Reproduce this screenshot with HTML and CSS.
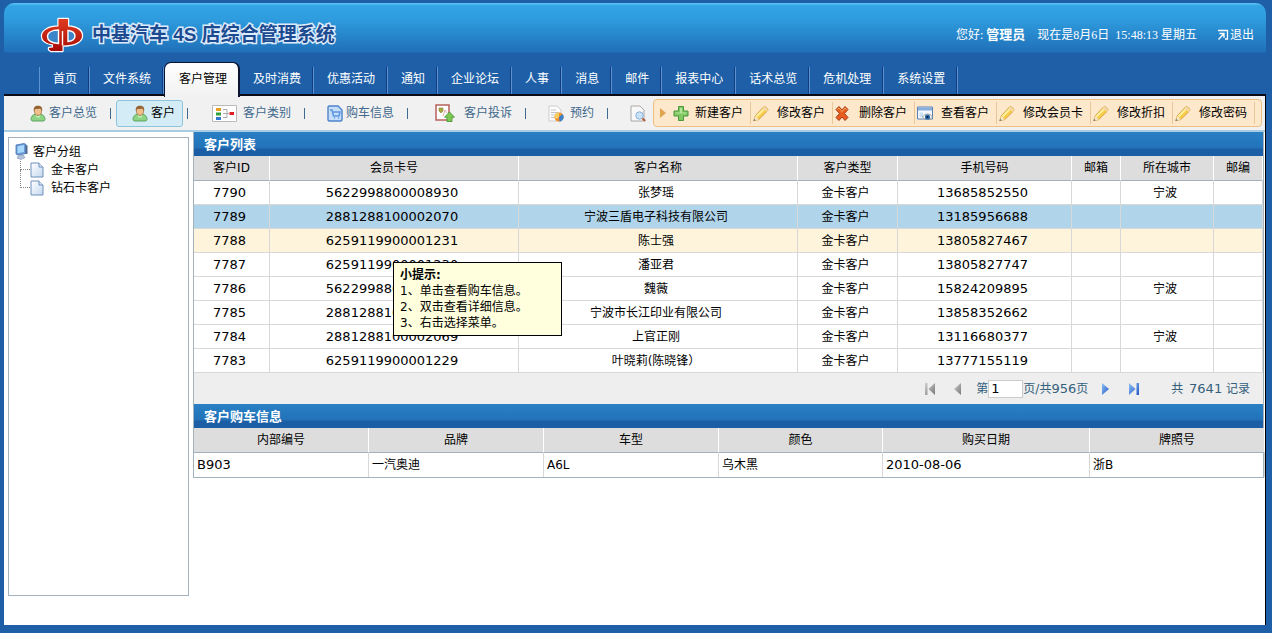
FILE: index.html
```html
<!DOCTYPE html>
<html lang="zh-CN">
<head>
<meta charset="utf-8">
<title>中基汽车 4S 店综合管理系统</title>
<link rel="stylesheet" href="styles.css">
</head>
<body>
<svg class="defs" aria-hidden="true">
  <defs>
    <linearGradient id="redFill" x1="0" y1="0" x2="0" y2="1"><stop offset="0" stop-color="#e03c20"/><stop offset="1" stop-color="#a80c08"/></linearGradient>
    <linearGradient id="blueFill" x1="0" y1="0" x2="1" y2="1"><stop offset="0" stop-color="#8cc4f4"/><stop offset="1" stop-color="#2454c8"/></linearGradient>
    <linearGradient id="grayFill" x1="0" y1="0" x2="1" y2="1"><stop offset="0" stop-color="#d0d0d0"/><stop offset="1" stop-color="#777"/></linearGradient>
    <linearGradient id="pageFill" x1="0" y1="0" x2="1" y2="1"><stop offset="0" stop-color="#fff"/><stop offset="1" stop-color="#c4d8f0"/></linearGradient>
    <symbol id="user" viewBox="0 0 16 16">
      <path d="M1 14c0-3 2-5 4.500-5.500h5C13 9 15 11 15 14c0 1-1 1.500-2 1.500H3c-1 0-2-.5-2-1.500z" fill="#8cd484" stroke="#5ca460"/>
      <path d="M6 9l2 2 2-2v3H6z" fill="#c4f0bc"/>
      <ellipse cx="8" cy="5.500" rx="3.500" ry="4.300" fill="#f0c08c" stroke="#a06a38" stroke-width=".7"/>
      <path d="M4 6C3 2 5 .3 8 .3S13 2 12 6c-.5-2-1-2.500-2-3-2 .8-4 .6-5 .4z" fill="#956434"/>
    </symbol>
    <symbol id="pencil" viewBox="0 0 16 16">
      <path d="M.8 15.200l1.500-5L10.500 1.500c1.500-1.500 5.500 2 4.200 3.700L5.800 14z" fill="#f8cc48" stroke="#d09c40" stroke-width=".9"/>
      <path d="M3.500 11L11.500 3" stroke="#fff0a0" stroke-width="2"/>
      <path d="M10.500 1.500c1.500-1.500 5.500 2 4.200 3.700l-1.200 1-4-3.700z" fill="#f2d7a4"/>
      <path d="M.8 15.200l1.500-5L5.800 14z" fill="#f5e4c4"/><path d="M.5 15.500l.6-2 1.400 1.300z" fill="#555"/>
    </symbol>
    <symbol id="page" viewBox="0 0 14 16">
      <path d="M1 1h8l4 4v10H1z" fill="url(#pageFill)" stroke="#6f91bd"/>
      <path d="M9 1v4h4" fill="#dbe8f8" stroke="#6f91bd"/>
    </symbol>
  </defs>
</svg>

<header class="header">
  <div class="brand">
    <svg class="logo" viewBox="0 0 44 36" aria-hidden="true">
      <path d="M18.500 2h9.500v7.500C37 10 42 13.500 42 19s-7 9.500-19.500 9.500V34H11l-2-1.500V31l4-.5v-3C6 26.500 2 23.500 2 19c0-5.500 7-9.500 16.500-9.500z" fill="url(#redFill)" stroke="#fff" stroke-width="2.400" stroke-linejoin="round" paint-order="stroke"/>
      <path d="M18.500 13C12 13 7.500 15.500 7.500 19.500S12 26 18.500 26.500z" fill="#3a86c8" stroke="#fff" stroke-width="1.400"/>
      <path d="M22.500 14v14.500" stroke="#fff" stroke-width="1.400"/>
      <path d="M28 13.500c4 .5 7 2.500 7 5.500s-3 5-7 5.500z" fill="#3a86c8" stroke="#fff" stroke-width="1.400"/>
    </svg>
    <h1 class="system-name">中基汽车 4S 店综合管理系统</h1>
    <div class="session">
      <span>您好: <strong class="session-user">管理员</strong></span>
      <span class="session-date">现在是8月6日</span>
      <span class="session-time">15:48:13 星期五</span>
      <a class="logout" href="#">
        <svg class="logout-icon" viewBox="0 0 12 12" aria-hidden="true"><path d="M1 1.500h9.500v8.500H8M2.500 4.500H7V9M7 4.500L1.500 10.500" fill="none" stroke="#fff" stroke-width="1.300"/></svg>退出</a>
    </div>
  </div>
  <nav class="tabs">
    <a class="tab" href="#">首页</a>
    <a class="tab" href="#">文件系统</a>
    <a class="tab tab-active" href="#" aria-current="page">客户管理</a>
    <a class="tab" href="#">及时消费</a>
    <a class="tab" href="#">优惠活动</a>
    <a class="tab" href="#">通知</a>
    <a class="tab" href="#">企业论坛</a>
    <a class="tab" href="#">人事</a>
    <a class="tab" href="#">消息</a>
    <a class="tab" href="#">邮件</a>
    <a class="tab" href="#">报表中心</a>
    <a class="tab" href="#">话术总览</a>
    <a class="tab" href="#">危机处理</a>
    <a class="tab" href="#">系统设置</a>
  </nav>
</header>

<div class="body-panel">
  <div class="toolbar">
    <nav class="views">
      <a class="view view-wide" href="#"><svg class="icon" aria-hidden="true"><use href="#user"/></svg>客户总览</a>
      <a class="view view-current" href="#"><svg class="icon" aria-hidden="true"><use href="#user"/></svg>客户</a>
      <a class="view view-wide view-spaced" href="#"><svg class="icon icon-chart" viewBox="0 0 25 17" aria-hidden="true"><path d="M.5.5h24v16H.5z" fill="#fff" stroke="#bbb"/><path d="M4 3h5v3H4z" fill="#e8a020"/><path d="M4 7.500h5v3H4z" fill="#30a040"/><path d="M4 12h5v3H4z" fill="#3078d0"/><path d="M11 4.500h4v8h-4M11 8.500h6" fill="none" stroke="#aaa"/><path d="M17.500 7H22v3h-4.500z" fill="#e02020"/></svg>客户类别</a>
      <a class="view" href="#"><svg class="icon" viewBox="0 0 16 17" aria-hidden="true"><path d="M1 2l1-1h9l4 4v10l-1 1H2l-1-1z" fill="#c6def8" stroke="#4c84cc" stroke-width="1.400"/><path d="M3 5h2l1.500 6H12l1-4H6M7 13h1M11 13h1" fill="none" stroke="#5a96e0" stroke-width="1.500"/></svg>购车信息</a>
      <a class="view view-loose" href="#"><svg class="icon icon-complaint" viewBox="0 0 20 18" aria-hidden="true"><path d="M1 1h13v15H1z" fill="#fff" stroke="#b8605c" stroke-width="1.500"/><path d="M4 4h4v3L6 9 4 7z" fill="#a8a840" stroke="#808030" stroke-width=".6"/><path d="M8 12l2-6 2 3" fill="none" stroke="#e4b0a8"/><path d="M14.500 8l5 5.200H17V17.500h-5v-4.300H9.500z" fill="#7cc850" stroke="#3f8f2c" stroke-width=".8"/></svg>客户投诉</a>
      <a class="view view-spaced" href="#"><svg class="icon" viewBox="0 0 16 17" aria-hidden="true"><path d="M1 1h8l4 4v11H1z" fill="#fcfcfc" stroke="#ccc"/><path d="M3 5h5M3 7.500h7M3 10h6M3 12.500h4" stroke="#c4c4c4"/><circle cx="11" cy="12" r="4.500" fill="#f0902c"/><path d="M11 12V7.500a4.500 4.500 0 0 0-4.500 4.500c1 2 3 2 4.500 0z" fill="#f4d060"/><path d="M11 12l3.500-3a4.500 4.500 0 0 1-3 7.500z" fill="#3c80c8"/></svg>预约</a>
      <a class="view view-last" href="#" aria-label="查询"><svg class="icon" viewBox="0 0 16 17" aria-hidden="true"><path d="M1 1h9l4 4v11H1z" fill="#f8f8f8" stroke="#a8a8a8"/><circle cx="9.500" cy="10.500" r="3.700" fill="#c8e2f8" stroke="#8cb0d4"/><path d="M12.500 13.500l2.700 2.500" stroke="#b06038" stroke-width="2"/></svg></a>
    </nav>
    <div class="actions">
      <svg class="actions-arrow" viewBox="0 0 6 10" aria-hidden="true"><path d="M0 0l6 5-6 5z" fill="#e0a450"/></svg>
      <button class="action action-first" type="button"><svg class="icon" viewBox="0 0 16 16" aria-hidden="true"><path d="M5.500 1h5v4.500H15v5h-4.500V15h-5v-4.500H1v-5h4.500z" fill="#80c860" stroke="#4c9640"/><path d="M7 2.500h2V7h4.500v1H2.500V7H7z" fill="#b4e49c"/></svg>新建客户</button>
      <button class="action" type="button"><svg class="icon" aria-hidden="true"><use href="#pencil"/></svg>修改客户</button>
      <button class="action" type="button"><svg class="icon" viewBox="0 0 16 16" aria-hidden="true"><path d="M1 4l3-3 3 3.500L10 1l3 3-3.500 4 3.500 4-3 3-3-3.500L4 15l-3-3 3.500-4z" fill="#e85c20" stroke="#a83c10"/><path d="M2.500 4L4 2.500l3 3.500 3-3.500L11.500 4" fill="none" stroke="#f8b060"/></svg>删除客户</button>
      <button class="action" type="button"><svg class="icon" viewBox="0 0 16 16" aria-hidden="true"><path d="M.5 1.500h15v12H.5z" fill="#f4f8fe" stroke="#5880b4"/><path d="M1 2h14v3H1z" fill="#88aedc"/><path d="M2.500 7H6v4.500H2.500z" fill="#cddff2"/><path d="M5.500 11.500c2.500-4 7.500-4 10 0-2.500 3.500-7.500 3.500-10 0z" fill="#fff" stroke="#888" stroke-width=".8"/><circle cx="10.500" cy="11.500" r="2.600" fill="#2468a8"/><circle cx="10.500" cy="11.500" r="1" fill="#0a1c3c"/></svg>查看客户</button>
      <button class="action" type="button"><svg class="icon" aria-hidden="true"><use href="#pencil"/></svg>修改会员卡</button>
      <button class="action" type="button"><svg class="icon" aria-hidden="true"><use href="#pencil"/></svg>修改折扣</button>
      <button class="action" type="button"><svg class="icon" aria-hidden="true"><use href="#pencil"/></svg>修改密码</button>
    </div>
  </div>

  <div class="workspace">
    <aside class="tree">
      <div class="tree-root"><svg class="tree-root-icon" viewBox="0 0 13 17" aria-hidden="true"><path d="M1 2l8-1.500 2 1v9L3 12 1 11z" fill="#6c9cd8" stroke="#4870b0" stroke-width=".8"/><path d="M2.500 3.200L9 2v7l-6.500 1.300z" fill="#a8d8fc"/><path d="M10.500 2l2 .5V11l-2-.3z" fill="#506890"/><path d="M4 12h4l2 2.500-4 2-4-1.500z" fill="#b4c4dc" stroke="#8090b0" stroke-width=".6"/></svg><a class="tree-link" href="#">客户分组</a></div>
      <ul class="tree-children">
        <li class="tree-item"><span class="tree-branch"></span><svg class="tree-page" aria-hidden="true"><use href="#page"/></svg><a class="tree-link" href="#">金卡客户</a></li>
        <li class="tree-item"><span class="tree-branch"></span><svg class="tree-page" aria-hidden="true"><use href="#page"/></svg><a class="tree-link" href="#">钻石卡客户</a></li>
      </ul>
    </aside>

    <main class="main">
      <section class="list">
        <h2 class="section-title">客户列表</h2>
        <table class="grid">
          <colgroup><col class="c-id"><col class="c-card"><col class="c-name"><col class="c-type"><col class="c-phone"><col class="c-mail"><col class="c-city"><col class="c-zip"></colgroup>
          <thead><tr><th>客户ID</th><th>会员卡号</th><th>客户名称</th><th>客户类型</th><th>手机号码</th><th>邮箱</th><th>所在城市</th><th>邮编</th></tr></thead>
          <tbody>
            <tr><td class="num">7790</td><td class="num">5622998800008930</td><td>张梦瑶</td><td>金卡客户</td><td class="num">13685852550</td><td></td><td>宁波</td><td></td></tr>
            <tr class="row-selected"><td class="num">7789</td><td class="num">2881288100002070</td><td>宁波三盾电子科技有限公司</td><td>金卡客户</td><td class="num">13185956688</td><td></td><td></td><td></td></tr>
            <tr class="row-hover"><td class="num">7788</td><td class="num">6259119900001231</td><td>陈士强</td><td>金卡客户</td><td class="num">13805827467</td><td></td><td></td><td></td></tr>
            <tr><td class="num">7787</td><td class="num">6259119900001230</td><td>潘亚君</td><td>金卡客户</td><td class="num">13805827747</td><td></td><td></td><td></td></tr>
            <tr><td class="num">7786</td><td class="num">5622998800008929</td><td>魏薇</td><td>金卡客户</td><td class="num">15824209895</td><td></td><td>宁波</td><td></td></tr>
            <tr><td class="num">7785</td><td class="num">2881288100002070</td><td>宁波市长江印业有限公司</td><td>金卡客户</td><td class="num">13858352662</td><td></td><td></td><td></td></tr>
            <tr><td class="num">7784</td><td class="num">2881288100002069</td><td>上官正刚</td><td>金卡客户</td><td class="num">13116680377</td><td></td><td>宁波</td><td></td></tr>
            <tr><td class="num">7783</td><td class="num">6259119900001229</td><td>叶晓莉(陈晓锋）</td><td>金卡客户</td><td class="num">13777155119</td><td></td><td></td><td></td></tr>
          </tbody>
        </table>
        <div class="tip" role="tooltip">
          <strong class="tip-title">小提示:</strong>
          <p class="tip-line">1、单击查看购车信息。</p>
          <p class="tip-line">2、双击查看详细信息。</p>
          <p class="tip-line">3、右击选择菜单。</p>
        </div>
      </section>

      <div class="pager">
        <button class="pager-button" type="button" aria-label="首页"><svg class="pager-icon" viewBox="0 0 12 12" aria-hidden="true"><path d="M1 0h2.500v12H1zM11 0v12L4.500 6z" fill="url(#grayFill)"/></svg></button>
        <button class="pager-button" type="button" aria-label="上一页"><svg class="pager-icon" viewBox="0 0 12 12" aria-hidden="true"><path d="M9 0v12L2 6z" fill="url(#grayFill)"/></svg></button>
        <div class="pager-position"><label for="page-number">第</label><input class="pager-input" id="page-number" type="text" value="1"><span>页/共<span class="num">956</span>页</span></div>
        <button class="pager-button" type="button" aria-label="下一页"><svg class="pager-icon" viewBox="0 0 12 12" aria-hidden="true"><path d="M2 0v12l7-6z" fill="url(#blueFill)"/></svg></button>
        <button class="pager-button" type="button" aria-label="末页"><svg class="pager-icon" viewBox="0 0 12 12" aria-hidden="true"><path d="M1 0v12l6.500-6zM8.500 0H11v12H8.500z" fill="url(#blueFill)"/></svg></button>
        <span class="pager-total">共 <span class="num pager-count">7641</span> 记录</span>
      </div>

      <section class="purchases">
        <h2 class="section-title">客户购车信息</h2>
        <table class="grid grid-purchases">
          <colgroup><col class="p-175"><col class="p-175"><col class="p-175"><col class="p-color"><col class="p-date"><col class="p-175"></colgroup>
          <thead><tr><th>内部编号</th><th>品牌</th><th>车型</th><th>颜色</th><th>购买日期</th><th>牌照号</th></tr></thead>
          <tbody><tr><td class="num">B903</td><td>一汽奥迪</td><td>A6L</td><td>乌木黑</td><td class="num">2010-08-06</td><td>浙B</td></tr></tbody>
        </table>
      </section>
    </main>
  </div>
</div>
</body>
</html>
```

FILE: styles.css
```css
* {
  box-sizing: border-box;
}

body {
  display: flex;
  flex-direction: column;
  min-height: 100vh;
  margin: 0;
  padding: 3px 6px 8px 4px;
  background: #1e5fa8;
  color: #000;
  font: 12px/16px "DejaVu Sans", "Noto Sans CJK SC", sans-serif;
}

a {
  color: inherit;
  text-decoration: none;
}

button {
  margin: 0;
  padding: 0;
  border: 0;
  background: none;
  color: inherit;
  font: inherit;
}

.defs {
  position: absolute;
  width: 0;
  height: 0;
}

/* Header */
.header {
  border-bottom: 2px solid #0a0a14;
  border-radius: 10px 10px 0 0;
  background: linear-gradient(#5cc4f4 0, #32a4e4 3px, #2e9cde 16px, #2070b8 49px, #1e5fa8 50px);
}

.brand {
  display: flex;
  align-items: center;
  height: 59px;
  padding: 5px 12px 0 36px;
}

.logo {
  width: 44px;
  height: 36px;
}

.system-name {
  margin: 0 auto 0 8px;
  color: #1c4a90;
  font: bold 19px/24px "Liberation Sans", "Noto Sans CJK SC", sans-serif;
  white-space: nowrap;
  -webkit-text-stroke: 3px #dcecfc;
  paint-order: stroke fill;
}

.session {
  display: flex;
  align-items: center;
  color: #fff;
  font-family: "Liberation Serif", "Noto Sans CJK SC", serif;
  white-space: nowrap;
}

.session-user {
  font-size: 13px;
}

.session-date {
  margin-left: 12px;
}

.session-time {
  margin-left: 6px;
}

.logout {
  display: flex;
  align-items: center;
  margin-left: 20px;
}

.logout-icon {
  width: 12px;
  height: 12px;
  margin-right: 1px;
}

/* Main navigation */
.tabs {
  display: flex;
  height: 32px;
  padding-left: 36px;
  color: #fff;
  white-space: nowrap;
}

.tab {
  height: 27px;
  margin-top: 5px;
  padding: 4px 12px 0 13px;
  border-right: 1px solid #5a94d4;
  box-shadow: inset -1px 0 #103c80;
}

.tab:first-child {
  box-shadow: -1px 0 #5a94d4, inset -1px 0 #103c80;
}

.tab-active {
  z-index: 1;
  height: 35px;
  margin-top: 0;
  padding: 8px 11px 0 14px;
  border: 1px solid #0a1430;
  border-width: 1px 2px 0 1px;
  border-radius: 7px 7px 0 0;
  background: linear-gradient(#fff, #f1f1f1);
  box-shadow: none;
  color: #000;
}

/* Toolbar */
.body-panel {
  display: flex;
  flex: 1;
  flex-direction: column;
  border-right: 1px solid #000;
  background: #fff;
}

.toolbar {
  display: flex;
  align-items: center;
  justify-content: space-between;
  height: 36px;
  padding: 0 3px 0 2px;
  border-bottom: 2px solid #a8cce4;
  background: #f1f1f1;
  white-space: nowrap;
}

.views {
  display: flex;
  align-items: center;
  color: #40688c;
}

.view {
  display: flex;
  align-items: center;
  gap: 3px;
  padding: 0 14px 0 22px;
}

.view::after {
  width: 1px;
  height: 11px;
  margin: 0 -14px 0 10px;
  background: #40688c;
  content: "";
}

.view-wide {
  padding-left: 24px;
}

.view-spaced {
  gap: 6px;
}

.view-spaced::after {
  margin: 0 -14px 0 7px;
}

.view-loose {
  gap: 9px;
  padding-left: 27px;
}

.view-loose::after {
  margin: 0 -14px 0 4px;
}

.view-current {
  height: 27px;
  margin: 0 5px;
  padding: 0 7px 0 15px;
  border: 1px solid #8cc4dc;
  border-radius: 3px;
  background: #d4ecf6;
  color: #000;
}

.view-current::after {
  margin: 0 -13px 0 9px;
}

.view-last {
  padding-right: 0;
}

.view-last::after {
  display: none;
}

.icon {
  flex: none;
  width: 16px;
  height: 17px;
}

.icon-chart {
  width: 25px;
}

.icon-complaint {
  width: 20px;
  height: 18px;
}

.actions {
  display: flex;
  align-items: center;
  height: 28px;
  padding: 0 6px;
  border: 1px solid #ecc080;
  border-radius: 4px;
  background: #fde8cc;
}

.actions-arrow {
  width: 6px;
  height: 10px;
  margin-right: 5px;
}

.action {
  display: flex;
  align-items: center;
  gap: 8px;
  height: 22px;
  padding: 0 7px 0 2px;
  border-right: 1px solid #e8c898;
}

.action-first {
  gap: 6px;
}

/* Workspace */
.workspace {
  display: flex;
  flex: 1;
  gap: 4px;
  padding-right: 1px;
}

.tree {
  flex: none;
  width: 181px;
  margin: 5px 0 29px 4px;
  padding: 4px 6px;
  border: 1px solid #a3b3bd;
}

.tree-root {
  display: flex;
  align-items: center;
  height: 19px;
  gap: 5px;
}

.tree-root-icon {
  width: 13px;
  height: 17px;
}

.tree-children {
  margin: 0;
  padding: 0 0 0 5px;
  list-style: none;
}

.tree-item {
  display: flex;
  align-items: center;
  height: 18px;
}

.tree-branch {
  align-self: flex-start;
  width: 10px;
  height: 9px;
  border-bottom: 1px dotted #888;
  border-left: 1px dotted #888;
}

.tree-item + .tree-item .tree-branch {
  height: 18px;
  margin-top: -9px;
}

.tree-page {
  width: 14px;
  height: 16px;
  margin-right: 7px;
}

.main {
  flex: 1;
  min-width: 0;
}

.list {
  position: relative;
  border: solid #a3b3bd;
  border-width: 0 1px;
}

.section-title {
  margin: 0;
  padding: 5px 10px 3px;
  background: linear-gradient(#2a80c4 0, #2272b8 16px, #1c5ea6 17px, #1c5ea6 100%);
  color: #fff;
  font-size: 13px;
  line-height: 16px;
}

.grid {
  width: 100%;
  border-collapse: separate;
  border-spacing: 0;
  table-layout: fixed;
}

.grid th {
  height: 25px;
  padding: 0;
  border-right: 1px solid #fff;
  border-bottom: 1px solid #a3b3bd;
  background: #ddd;
  font-weight: normal;
}

.grid td {
  height: 24px;
  padding: 0 4px 0 0;
  border-right: 1px solid #d8d8d8;
  border-bottom: 1px solid #d8d8d8;
  text-align: center;
}

.num,
.grid .num {
  font-size: 13px;
}

.row-selected {
  background: #b0d4ea;
}

.row-hover {
  background: #fef4dc;
}

.c-id { width: 76px; }
.c-card { width: 249px; }
.c-name { width: 279px; }
.c-type { width: 100px; }
.c-phone { width: 174px; }
.c-mail { width: 49px; }
.c-city { width: 93px; }
.c-zip { width: 49px; }

.tip {
  position: absolute;
  top: 130px;
  left: 199px;
  width: 169px;
  padding: 4px 6px;
  border: 1px solid #000;
  background: #ffffdd;
}

.tip-title {
  display: block;
}

.tip-line {
  margin: 0;
}

/* Pager */
.pager {
  display: flex;
  align-items: center;
  justify-content: flex-end;
  height: 31px;
  padding-right: 13px;
  border: solid #a3b3bd;
  border-width: 0 1px;
  background: #eee;
  color: #34607c;
  white-space: nowrap;
}

.pager-button {
  display: flex;
  margin-right: 16px;
}

.pager-icon {
  width: 12px;
  height: 12px;
}

.pager-position {
  display: flex;
  align-items: center;
  margin: 0 12px 0 -4px;
}

.pager-input {
  width: 35px;
  height: 18px;
  padding: 0 2px;
  border: 1px solid #ccc;
  background: #fff;
  color: #000;
  font: 13px/16px "DejaVu Sans", sans-serif;
}

.pager-total {
  margin-left: 15px;
}

.pager-count {
  margin-left: 2px;
}

/* Purchases */
.purchases {
  border: solid #a3b3bd;
  border-width: 0 1px 1px;
}

.grid-purchases td {
  padding: 0 0 0 3px;
  border-bottom: 0;
  text-align: left;
}

.p-175 { width: 175px; }
.p-color { width: 164px; }
.p-date { width: 207px; }
```
